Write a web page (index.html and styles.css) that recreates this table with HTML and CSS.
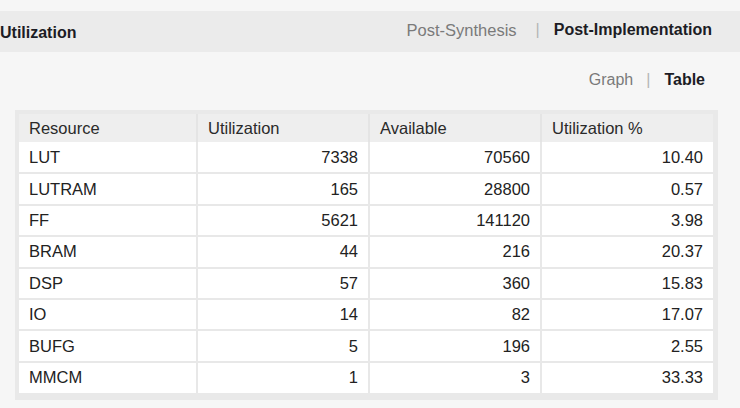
FILE: index.html
```html
<!DOCTYPE html>
<html>
<head>
<meta charset="utf-8">
<link rel="stylesheet" href="styles.css">
</head>
<body>
<div class="header">
  <div class="title">Utilization</div>
  <div class="tabs">
    <span class="tab">Post-Synthesis</span>
    <span class="sep">|</span>
    <span class="tab active">Post-Implementation</span>
  </div>
</div>
<div class="views">
  <span class="tab small">Graph</span>
  <span class="sep">|</span>
  <span class="tab small active">Table</span>
</div>
<div class="wrap">
  <table class="util">
    <thead>
      <tr><th class="c1">Resource</th><th>Utilization</th><th>Available</th><th>Utilization %</th></tr>
    </thead>
    <tbody>
      <tr><td>LUT</td><td class="n">7338</td><td class="n">70560</td><td class="n">10.40</td></tr>
      <tr><td>LUTRAM</td><td class="n">165</td><td class="n">28800</td><td class="n">0.57</td></tr>
      <tr><td>FF</td><td class="n">5621</td><td class="n">141120</td><td class="n">3.98</td></tr>
      <tr><td>BRAM</td><td class="n">44</td><td class="n">216</td><td class="n">20.37</td></tr>
      <tr><td>DSP</td><td class="n">57</td><td class="n">360</td><td class="n">15.83</td></tr>
      <tr><td>IO</td><td class="n">14</td><td class="n">82</td><td class="n">17.07</td></tr>
      <tr><td>BUFG</td><td class="n">5</td><td class="n">196</td><td class="n">2.55</td></tr>
      <tr><td>MMCM</td><td class="n">1</td><td class="n">3</td><td class="n">33.33</td></tr>
    </tbody>
  </table>
</div>
</body>
</html>
```

FILE: styles.css
```css
* { box-sizing: border-box; }
html, body {
  margin: 0;
  padding: 0;
  background: #f6f6f6;
  font-family: "Liberation Sans", Arial, sans-serif;
  color: #222;
}
body { padding-top: 11px; }
.header {
  height: 41px;
  background: #ebebeb;
  display: flex;
  align-items: center;
  justify-content: space-between;
  padding-right: 28px;
}
.title {
  font-weight: bold;
  font-size: 16px;
  margin-left: 0;
  color: #1c1c24;
  padding-top: 2px;
}
.tabs {
  display: flex;
  align-items: center;
  font-size: 16.5px;
  margin-top: -3px;
}
.tab { color: #7a7a7a; }
.tab.active { color: #1c1c24; font-weight: bold; font-size: 16px; }
.sep {
  color: #b5b5b5;
  margin: 0 14px 0 19px;
  font-size: 16px;
}
.views {
  display: flex;
  justify-content: flex-end;
  align-items: center;
  height: 58px;
  padding-right: 35px;
  padding-bottom: 3px;
}
.views .tab.small { font-size: 16px; }
.views .sep { margin: 0 14px 0 13px; }
.wrap {
  margin-left: 15px;
  width: 703px;
  background: #e9e9e9;
  padding: 4px 5px 7px 4px;
}
.util {
  border-collapse: collapse;
  width: 694px;
  table-layout: fixed;
  font-size: 16.5px;
}
.util th {
  background: #eeeeee;
  font-weight: normal;
  text-align: left;
  height: 28px;
  padding: 0 10px;
  color: #2a2a2a;
  border-left: 2px solid #e4e4e4;
  width: 172px;
}
.util th.c1 { width: 178px; border-left: none; }
.util td {
  background: #ffffff;
  height: 31.4px;
  padding: 0 10px;
  border-top: 2px solid #e8e8e8;
  border-left: 2px solid #e8e8e8;
  color: #222;
}
.util td:first-child { border-left: none; }
.util tbody tr:first-child td { border-top: none; }
.util td.n { text-align: right; }
```
